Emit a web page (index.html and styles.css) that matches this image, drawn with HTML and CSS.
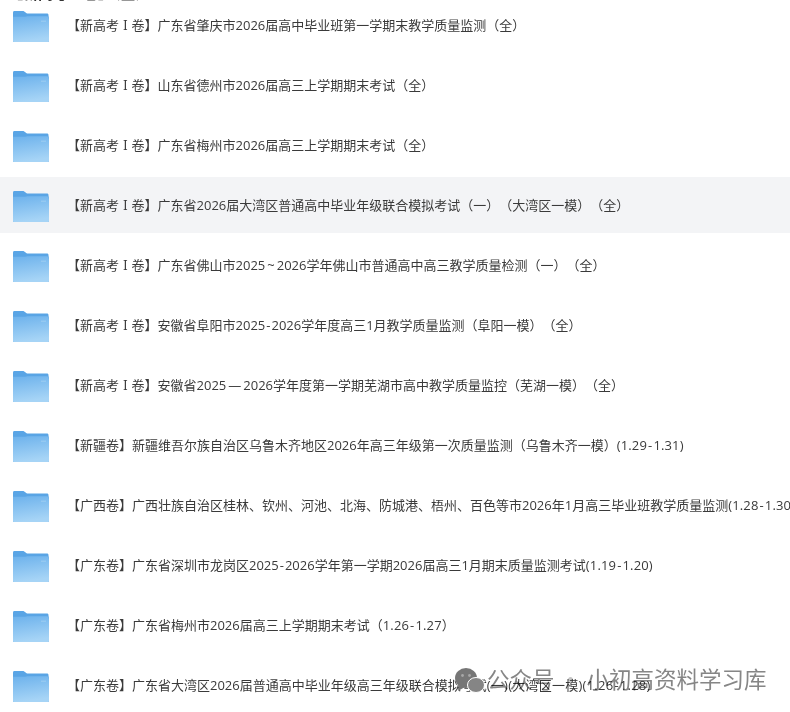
FILE: index.html
```html
<!DOCTYPE html>
<html lang="zh">
<head>
<meta charset="utf-8">
<title>资料列表</title>
<link rel="stylesheet" href="styles.css">
</head>
<body>
<svg width="0" height="0" class="defs" aria-hidden="true">
  <defs>
    <linearGradient id="fb" x1="0" y1="0" x2="0.2" y2="1">
      <stop offset="0" stop-color="#6db2ec"/>
      <stop offset="1" stop-color="#a6d4f6"/>
    </linearGradient>
    <linearGradient id="bk" x1="0" y1="0" x2="0" y2="1">
      <stop offset="0" stop-color="#5aa5e6"/>
      <stop offset="1" stop-color="#5aa2dc"/>
    </linearGradient>
    <symbol id="folder" viewBox="0 0 36 32" preserveAspectRatio="none">
      <path d="M0 1.500Q0 0 1.500 0H10.500L14 2.500H34.500Q35 2.500 35.300 3L36 8V32H0Z" fill="url(#bk)"/>
      <path d="M0 6L12 6L14.500 5.500H34.500L36 8V31.500Q36 32 35.500 32H0.500Q0 32 0 31.500Z" fill="url(#fb)"/>
      <rect x="28" y="10" width="5" height="1" fill="#a0cff2"/>
    </symbol>
  </defs>
</svg>
<div class="top-fragment">【新高考Ⅰ卷】（全）</div>
<ul class="list">
  <li class="row"><svg class="icon"><use href="#folder"/></svg><span class="label">【新高考 <span class="num">Ⅰ</span> 卷】广东省肇庆市2026届高中毕业班第一学期末教学质量监测（全）</span></li>
  <li class="row"><svg class="icon"><use href="#folder"/></svg><span class="label">【新高考 <span class="num">Ⅰ</span> 卷】山东省德州市2026届高三上学期期末考试（全）</span></li>
  <li class="row"><svg class="icon"><use href="#folder"/></svg><span class="label">【新高考 <span class="num">Ⅰ</span> 卷】广东省梅州市2026届高三上学期期末考试（全）</span></li>
  <li class="row active"><svg class="icon"><use href="#folder"/></svg><span class="label">【新高考 <span class="num">Ⅰ</span> 卷】广东省2026届大湾区普通高中毕业年级联合模拟考试（一）（大湾区一模）（全）</span></li>
  <li class="row"><svg class="icon"><use href="#folder"/></svg><span class="label">【新高考 <span class="num">Ⅰ</span> 卷】广东省佛山市2025<span class="wide-sep">~</span>2026学年佛山市普通高中高三教学质量检测（一）（全）</span></li>
  <li class="row"><svg class="icon"><use href="#folder"/></svg><span class="label">【新高考 <span class="num">Ⅰ</span> 卷】安徽省阜阳市2025<span class="hyphen">-</span>2026学年度高三1月教学质量监测（阜阳一模）（全）</span></li>
  <li class="row"><svg class="icon"><use href="#folder"/></svg><span class="label">【新高考 <span class="num">Ⅰ</span> 卷】安徽省2025<span class="wide-sep">—</span>2026学年度第一学期芜湖市高中教学质量监控（芜湖一模）（全）</span></li>
  <li class="row"><svg class="icon"><use href="#folder"/></svg><span class="label">【新疆卷】新疆维吾尔族自治区乌鲁木齐地区2026年高三年级第一次质量监测（乌鲁木齐一模）<span class="range">(1.29<span class="hyphen">-</span>1.31)</span></span></li>
  <li class="row"><svg class="icon"><use href="#folder"/></svg><span class="label">【广西卷】广西壮族自治区桂林、钦州、河池、北海、防城港、梧州、百色等市2026年1月高三毕业班教学质量监测<span class="range">(1.28<span class="hyphen">-</span>1.30)</span></span></li>
  <li class="row"><svg class="icon"><use href="#folder"/></svg><span class="label">【广东卷】广东省深圳市龙岗区2025<span class="hyphen">-</span>2026学年第一学期2026届高三1月期末质量监测考试<span class="range">(1.19<span class="hyphen">-</span>1.20)</span></span></li>
  <li class="row"><svg class="icon"><use href="#folder"/></svg><span class="label">【广东卷】广东省梅州市2026届高三上学期期末考试（<span class="range">1.26<span class="hyphen">-</span>1.27</span>）</span></li>
  <li class="row"><svg class="icon"><use href="#folder"/></svg><span class="label">【广东卷】广东省大湾区2026届普通高中毕业年级高三年级联合模拟考试<span class="range-wide">(一)(大湾区一模)(1.26<span class="hyphen">-</span>1.28)</span></span></li>
</ul>
<div class="watermark">
  <svg class="wechat" viewBox="0 0 30 25" aria-hidden="true">
    <ellipse cx="11" cy="10" rx="11" ry="10" fill="#767676"/>
    <path d="M4 17L3 23L10 19Z" fill="#767676"/>
    <circle cx="7.500" cy="7.500" r="1.400" fill="#a8a8a8"/>
    <circle cx="14.500" cy="7.500" r="1.400" fill="#a8a8a8"/>
    <ellipse cx="21" cy="17" rx="8.500" ry="7.500" fill="#858585" stroke="#fff" stroke-width="1"/>
  </svg>
  <span class="wm-text">公众号<span class="wm-sep">·</span>小初高资料学习库</span>
</div>
</body>
</html>
```

FILE: styles.css
```css
html, body {
  margin: 0;
  padding: 0;
  background: #fff;
}
body {
  position: relative;
  width: 790px;
  height: 712px;
  overflow: hidden;
  font-family: "Noto Sans CJK SC", "Liberation Sans", sans-serif;
}
.defs {
  position: absolute;
}
.top-fragment {
  position: absolute;
  left: 8px;
  top: -15px;
  font-size: 15px;
  line-height: 16px;
  font-weight: 700;
  color: #333;
}
.list {
  list-style: none;
  margin: -3px 0 0;
  padding: 0;
  display: flex;
  flex-direction: column;
  gap: 4px;
}
.row {
  height: 56px;
  display: flex;
  align-items: center;
  padding-left: 13px;
  white-space: nowrap;
}
.row.active {
  background: #f3f4f6;
}
.icon {
  width: 36px;
  height: 31px;
  flex: none;
  margin-right: 18px;
  position: relative;
  top: 1.500px;
}
.label {
  font-family: "Open Sans", "Noto Sans CJK SC", sans-serif;
  font-size: 13px;
  line-height: 18px;
  color: #3a3a3a;
  text-spacing-trim: space-all;
}
.num {
  font-family: "DejaVu Serif", serif;
  font-size: 12px;
  margin: 0 0.500px;
}
.hyphen {
  margin: 0 1px;
}
.wide-sep {
  margin: 0 2px;
}
.range {
  letter-spacing: 0.150px;
}
.range-wide {
  letter-spacing: 0.250px;
}
.watermark {
  position: absolute;
  left: 455px;
  top: 663px;
  display: flex;
  align-items: center;
  gap: 2px;
}
.wechat {
  width: 30px;
  height: 25px;
  flex: none;
  margin-top: 4px;
}
.wm-text {
  font-size: 22.500px;
  line-height: 30px;
  color: #868686;
  white-space: nowrap;
  mix-blend-mode: multiply;
}
.wm-sep {
  display: inline-block;
  width: 32px;
  text-align: center;
  color: #c4c4c4;
}
```
